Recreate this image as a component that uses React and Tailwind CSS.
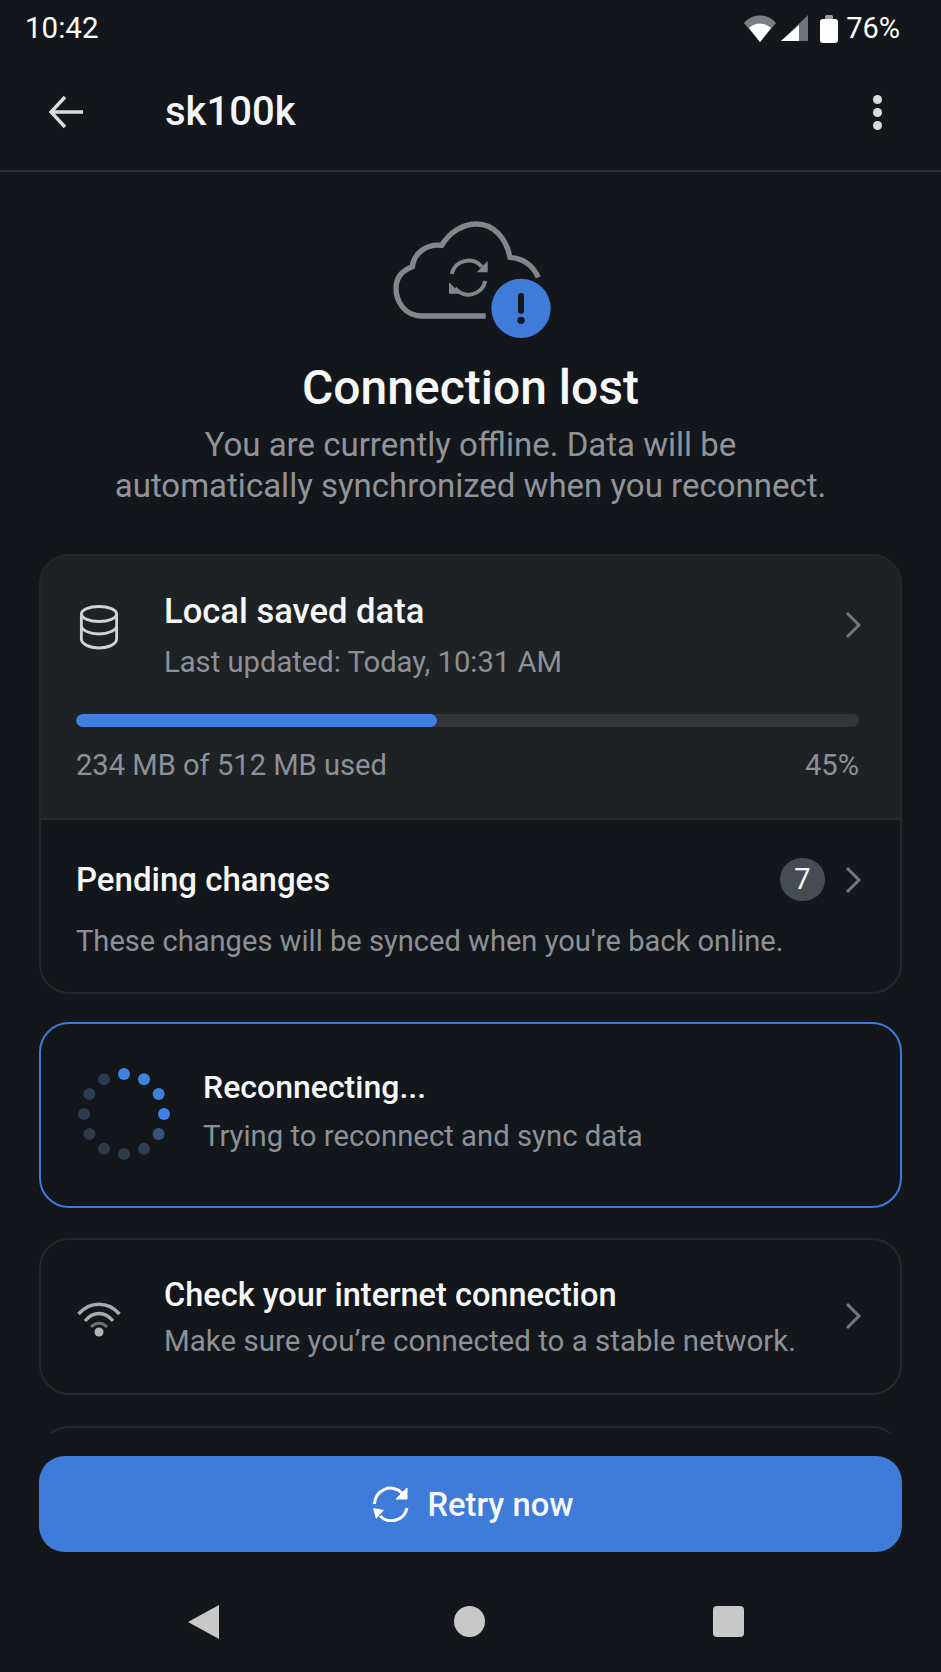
import React from "react";

const Chevron = ({ className = "" }) => (
  <svg width="20" height="30" viewBox="0 0 20 30" fill="none" className={className}>
    <path d="M3 3 L15 15 L3 27" stroke="#73777d" strokeWidth="3" />
  </svg>
);

const Spinner = ({ className = "" }) => {
  const dots = [];
  const colors = ["#3f82e4", "#3f82e0", "#3f7fdc", "#3f82e4", "#35557f", "#2f3f55", "#2f3a48", "#2e3a4a", "#2e3a4a", "#2d3a4b", "#2c3b50", "#2b3a50"];
  for (let i = 0; i < 12; i++) {
    const a = (i * 30 * Math.PI) / 180;
    dots.push(<circle key={i} cx={46 + 40 * Math.sin(a)} cy={46 - 40 * Math.cos(a)} r="6" fill={colors[i]} />);
  }
  return (
    <svg width="92" height="92" viewBox="0 0 92 92" className={className}>
      {dots}
    </svg>
  );
};

const CloudIcon = () => (
  <svg width="260" height="150" viewBox="0 0 780 450" fill="none" className="block">
    <path
      d="M437 348 L245 348 C195 348 168 305 168 265 C168 235 185 212 217 200 C222 160 260 130 305 136 C330 95 370 72 410 72 C465 72 500 120 510 172 C550 175 578 195 595 232"
      stroke="#83868b"
      strokeWidth="16"
    />
    <path d="M335 222 A52 52 0 0 1 425 200" stroke="#83868b" strokeWidth="12" />
    <path d="M443 183 L443 217 L410 217 Z" fill="#83868b" />
    <path d="M436 243 A52 52 0 0 1 345 265" stroke="#83868b" strokeWidth="12" />
    <path d="M327 247 L327 281 L362 281 Z" fill="#83868b" />
    <circle cx="543" cy="325" r="89" fill="#3f7bd9" />
    <rect x="534" y="279" width="18" height="62" rx="8" fill="#13171b" />
    <circle cx="543" cy="361" r="11" fill="#13171b" />
  </svg>
);

const SyncSmall = () => (
  <svg width="38" height="36" viewBox="0 0 38 36" fill="none" className="shrink-0">
    <path d="M2.5 18 A16 16 0 0 1 30 7" stroke="#fff" strokeWidth="3" />
    <path d="M35 2 L35 13 L24 13 Z" fill="#fff" stroke="#fff" strokeWidth="1" />
    <path d="M35 22 A16 16 0 0 1 8 30" stroke="#fff" strokeWidth="3" />
    <path d="M1 22 L12 24 L4 33 Z" fill="#fff" />
  </svg>
);

export default function App() {
  return (
    <div className="w-[941px] h-[1672px] flex flex-col overflow-hidden bg-[#13171b] text-white font-['Roboto',sans-serif]">
      {/* status bar */}
      <div className="h-[56px] shrink-0 flex items-center justify-between pl-[25px] pr-[41px] pt-[1px]">
        <span className="text-[29.5px] leading-none">10:42</span>
        <div className="flex items-center">
          <svg width="32" height="28" viewBox="0 0 32 28">
            <path d="M0 8 C8 -2 24 -2 32 8 L16 27 Z" fill="#7b7e82" />
            <path d="M5 13 C11 7 21 7 27 13 L16 27 Z" fill="#fff" />
          </svg>
          <svg width="28" height="27" viewBox="0 0 28 27" className="ml-[5px] mr-[11px]">
            <path d="M27 0 L27 26 L0 26 Z" fill="#6f7276" />
            <path d="M18 10 L18 26 L0 26 Z" fill="#fff" />
          </svg>
          <svg width="18" height="28" viewBox="0 0 18 28" className="mr-[8px]">
            <rect x="5" y="0" width="8" height="5" rx="1.5" fill="#9a9da1" />
            <rect x="0" y="4" width="18" height="24" rx="3" fill="#fff" />
          </svg>
          <span className="text-[29px] leading-none">76%</span>
        </div>
      </div>

      {/* header */}
      <div className="h-[116px] shrink-0 flex items-center border-b-2 border-[#2d3034] pb-[2px]">
        <svg width="36" height="36" viewBox="0 0 36 36" fill="none" className="ml-[48px]">
          <path d="M17 3 L3 18 L17 33 M3 18 L35 18" stroke="#dcdcdc" strokeWidth="3.4" />
        </svg>
        <span className="ml-[81px] text-[40px] leading-none font-medium text-[#f4f5f6]">sk100k</span>
        <div className="ml-auto mr-[59px] flex flex-col gap-[4px]">
          <span className="w-[9px] h-[9px] rounded-full bg-[#dcdcdc]" />
          <span className="w-[9px] h-[9px] rounded-full bg-[#dcdcdc]" />
          <span className="w-[9px] h-[9px] rounded-full bg-[#dcdcdc]" />
        </div>
      </div>

      {/* main */}
      <div className="flex-1 min-h-0 overflow-hidden px-[39px]">
        <div className="flex justify-center pt-[28px] -ml-[2px]">
          <CloudIcon />
        </div>
        <h1 className="text-center text-[48px] leading-[52px] font-medium text-[#f6f7f8] mt-[12px]">Connection lost</h1>
        <p className="text-center text-[33px] leading-[41px] text-[#90949a] mt-[10px]">
          You are currently offline. Data will be
          <br />
          automatically synchronized when you reconnect.
        </p>

        {/* storage card */}
        <div className="mt-[48px] border-2 border-[#24282d] rounded-[30px] overflow-hidden">
          <div className="bg-[#1e2225] pt-[34px] pb-[35px] pl-[35px] pr-[41px] border-b-2 border-[#25292d]">
            <div className="flex items-start">
              <svg width="40" height="46" viewBox="0 0 42 46" fill="none" preserveAspectRatio="none" className="mt-[15px] ml-[3px] shrink-0">
                <ellipse cx="21" cy="9" rx="18.5" ry="7.5" stroke="#d0d2d4" strokeWidth="3" />
                <path d="M2.5 9 V21 C2.5 25 11 29 21 29 C31 29 39.5 25 39.5 21 V9" stroke="#d0d2d4" strokeWidth="3" />
                <path d="M2.5 21 V34 C2.5 39 11 43 21 43 C31 43 39.5 39 39.5 34 V21" stroke="#d0d2d4" strokeWidth="3" />
              </svg>
              <div className="ml-[45px] flex-1">
                <div className="text-[34.6px] leading-[42px] font-medium text-[#f6f7f8]">Local saved data</div>
                <div className="text-[29.2px] leading-[36px] text-[#8d9197] mt-[12px]">Last updated: Today, 10:31 AM</div>
              </div>
              <Chevron className="mt-[20px] mr-[-5px]" />
            </div>
            <div className="mt-[34px] h-[13px] rounded-full bg-[#32363b] overflow-hidden">
              <div className="h-full w-[46.1%] rounded-full bg-[#3f7fdf]" />
            </div>
            <div className="mt-[20px] flex justify-between text-[29.1px] leading-[36px] text-[#8d9197]">
              <span>234 MB of 512 MB used</span>
              <span>45%</span>
            </div>
          </div>
          <div className="pt-[38px] pb-[33px] pl-[35px] pr-[37px]">
            <div className="flex items-center">
              <span className="text-[33px] leading-[42px] font-medium text-[#f6f7f8]">Pending changes</span>
              <span className="ml-auto mr-[-1px] w-[45px] h-[43px] rounded-full bg-[#474c53] flex items-center justify-center text-[29px] text-[#f4f5f6]">7</span>
              <Chevron className="ml-[20px] mr-[-1px]" />
            </div>
            <div className="text-[29.1px] leading-[36px] text-[#8d9197] mt-[22px]">These changes will be synced when you're back online.</div>
          </div>
        </div>

        {/* reconnecting */}
        <div className="mt-[28px] h-[186px] border-2 border-[#3f7bd9] rounded-[30px] flex items-center pl-[37px]">
          <Spinner className="shrink-0 mb-[2px]" />
          <div className="ml-[33px] pb-[11px]">
            <div className="text-[32px] leading-[42px] font-medium text-[#f6f7f8]">Reconnecting...</div>
            <div className="text-[29.3px] leading-[36px] text-[#8d9197] mt-[10px]">Trying to reconnect and sync data</div>
          </div>
        </div>

        {/* check */}
        <div className="mt-[30px] h-[157px] border-2 border-[#24282d] rounded-[30px] flex items-center pl-[36px] pr-[37px]">
          <svg width="44" height="36" viewBox="0 0 44 36" fill="none" className="shrink-0 mt-[6px]">
            <path d="M1.5 12 C13 -1 31 -1 42.5 12" stroke="#a6a9ad" strokeWidth="3.5" />
            <path d="M8 19 C16 9 28 9 36 19" stroke="#a6a9ad" strokeWidth="3.5" />
            <path d="M14 25 C19 20 25 20 30 25" stroke="#6c6f74" strokeWidth="3" />
            <circle cx="22" cy="30" r="4.5" fill="#b0b3b6" />
          </svg>
          <div className="ml-[43px] flex-1">
            <div className="text-[32.5px] leading-[42px] font-medium text-[#f6f7f8]">Check your internet connection</div>
            <div className="text-[29.5px] leading-[36px] text-[#8d9197] mt-[7px]">Make sure you’re connected to a stable network.</div>
          </div>
          <Chevron className="mr-[-1px] mb-[2px]" />
        </div>

        <div className="mt-[31px] h-[100px] border-2 border-[#24282d] rounded-[30px]" />
      </div>

      {/* footer */}
      <div className="shrink-0 px-[39px] pt-[23px]">
        <button className="w-full h-[96px] rounded-[26px] bg-[#3f7bd9] flex items-center justify-center gap-[18px] pl-[4px] text-[32.7px] font-medium text-[#f4f7fd]">
          <SyncSmall />
          <span className="pt-[3px]">Retry now</span>
        </button>
      </div>

      {/* nav */}
      <div className="h-[120px] shrink-0 flex items-center justify-center pt-[19px] pr-[10px]">
        <svg width="32" height="34" viewBox="0 0 32 34" className="mr-[234px]">
          <path d="M31 0 V34 L0 17 Z" fill="#c8c8c8" />
        </svg>
        <span className="w-[31px] h-[31px] rounded-full bg-[#c8c8c8]" />
        <span className="w-[31px] h-[31px] rounded-[4px] bg-[#c8c8c8] ml-[228px]" />
      </div>
    </div>
  );
}
